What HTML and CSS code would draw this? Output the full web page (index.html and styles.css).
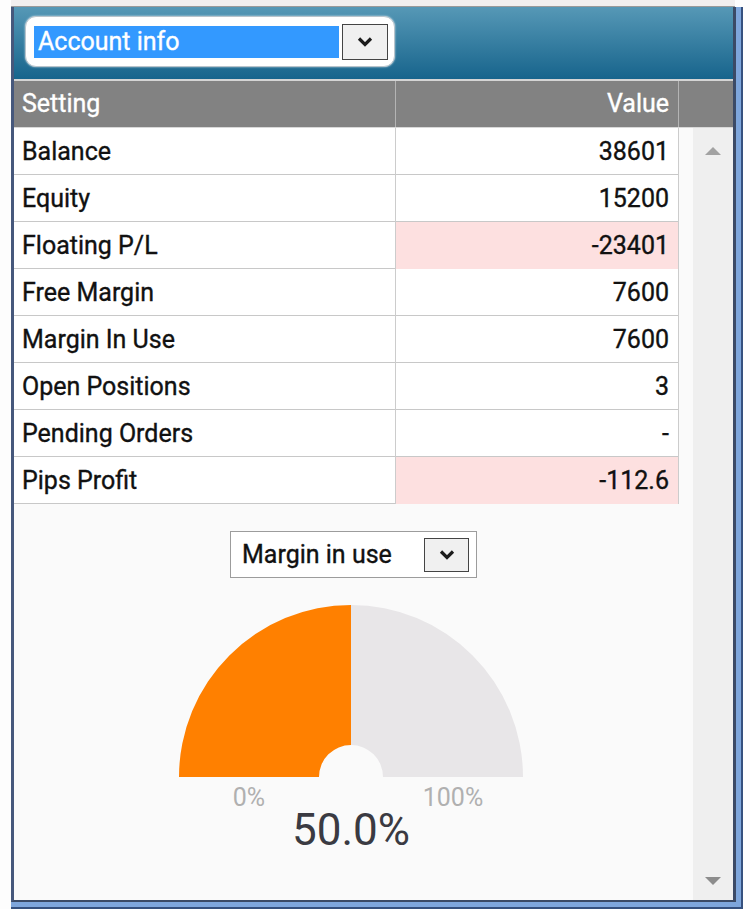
FILE: index.html
```html
<!DOCTYPE html>
<html lang="en">
<head>
    <meta charset="UTF-8">
    <title>Account info</title>
    <link rel="stylesheet" href="styles.css">
</head>
<body>
    <div class="screen">
        <div class="topbar"></div>
        <div class="frame-row">
            <div class="frame-outer">
                <div class="frame-mid">
                    <div class="window">
                        <div class="titlebar">
                            <div class="title-select">
                                <span class="title-text">Account info</span>
                                <span class="drop-btn">
                                    <svg width="20" height="12" viewBox="0 0 20 12"><path d="M4 2.5 L10 8.5 L16 2.5" fill="none" stroke="#1c1c1c" stroke-width="3.2"/></svg>
                                </span>
                            </div>
                        </div>
                        <div class="sep"></div>
                        <div class="thead">
                            <div class="th th-setting">Setting</div>
                            <div class="th th-value">Value</div>
                            <div class="th"></div>
                        </div>
                        <div class="body">
                            <div class="content">
                                <div class="rows">
                                    <div class="row"><div class="cell">Balance</div><div class="cell val">38601</div><div></div></div>
                                    <div class="row"><div class="cell">Equity</div><div class="cell val">15200</div><div></div></div>
                                    <div class="row"><div class="cell">Floating P/L</div><div class="cell val neg">-23401</div><div></div></div>
                                    <div class="row"><div class="cell">Free Margin</div><div class="cell val">7600</div><div></div></div>
                                    <div class="row"><div class="cell">Margin In Use</div><div class="cell val">7600</div><div></div></div>
                                    <div class="row"><div class="cell">Open Positions</div><div class="cell val">3</div><div></div></div>
                                    <div class="row"><div class="cell">Pending Orders</div><div class="cell val">-</div><div></div></div>
                                    <div class="row"><div class="cell">Pips Profit</div><div class="cell val neg">-112.6</div><div></div></div>
                                </div>
                                <div class="chart">
                                    <div class="chart-select">
                                        <span>Margin in use</span>
                                        <span class="drop-btn small">
                                            <svg width="20" height="12" viewBox="0 0 20 12"><path d="M4 2.5 L10 8.5 L16 2.5" fill="none" stroke="#1c1c1c" stroke-width="3.2"/></svg>
                                        </span>
                                    </div>
                                    <div class="gauge-wrap">
                                        <svg class="gauge" width="344" height="172" viewBox="0 0 344 172">
                                            <path d="M0 172 A172 172 0 0 1 172 0 L172 140 A32 32 0 0 0 140 172 Z" fill="#ff8000"/>
                                            <path d="M172 0 A172 172 0 0 1 344 172 L204 172 A32 32 0 0 0 172 140 Z" fill="#e8e6e8"/>
                                        </svg>
                                        <div class="gauge-labels">
                                            <span>0%</span>
                                            <span>100%</span>
                                        </div>
                                        <div class="gauge-value">50.0%</div>
                                    </div>
                                </div>
                            </div>
                            <div class="scrollbar">
                                <span class="arrow up"></span>
                                <span class="arrow down"></span>
                            </div>
                        </div>
                    </div>
                </div>
            </div>
        </div>
    </div>
</body>
</html>
```

FILE: styles.css
```css
* {
    box-sizing: border-box;
}

body {
    margin: 0;
    background: #fdfdfd;
    font-family: Roboto, "Liberation Sans", sans-serif;
}

.screen {
    width: 750px;
    height: 909px;
    display: flex;
    flex-direction: column;
    overflow: hidden;
}

.topbar {
    height: 7px;
    background: #f1efef;
    border-bottom: 1px solid #9a9a9a;
    margin-left: 11px;
    margin-right: 15px;
}

.frame-row {
    display: flex;
    padding-left: 11px;
}

.frame-outer {
    border-right: 2px solid #35507e;
    border-bottom: 2px solid #35507e;
}

.frame-mid {
    border-right: 5px solid #7ea6dc;
    border-bottom: 5px solid #7ea6dc;
}

.window {
    width: 725px;
    height: 895px;
    border-left: 3px solid #46587c;
    border-right: 3px solid #3b4a66;
    border-bottom: 2px solid #3b4a66;
    display: flex;
    flex-direction: column;
    background: #fafafa;
}

.titlebar {
    height: 72px;
    background: linear-gradient(#5698b6, #17648c);
    padding: 9px 0 0 11px;
}

.title-select {
    width: 370px;
    height: 51px;
    background: #fff;
    border: 1px solid #b8c4cc;
    border-radius: 11px;
    box-shadow: 0 0 2px rgba(255, 255, 255, 0.8);
    display: flex;
    align-items: center;
    padding: 0 6px 0 8px;
    gap: 3px;
}

.title-text {
    flex: 1;
    height: 32px;
    background: #3399ff;
    color: #fff;
    font-size: 25px;
    line-height: 32px;
    padding-left: 4px;
    -webkit-text-stroke: 0.35px #fff;
}

.drop-btn {
    width: 46px;
    height: 36px;
    background: #f0f0f0;
    border: 1px solid #444;
    display: flex;
    align-items: center;
    justify-content: center;
}

.drop-btn.small {
    width: 45px;
    height: 34px;
}

.sep {
    height: 2px;
    background: #d4d4d4;
}

.thead {
    height: 47px;
    display: grid;
    grid-template-columns: 382px 283px 1fr;
    background: #828282;
    border-bottom: 1px solid #d8d8d8;
}

.th {
    color: #fff;
    font-size: 25px;
    line-height: 46px;
    border-right: 1px solid #b4b4b4;
    -webkit-text-stroke: 0.35px #fff;
}

.th:last-child {
    border-right: none;
}

.th-setting {
    padding-left: 8px;
}

.th-value {
    text-align: right;
    padding-right: 9px;
}

.body {
    flex: 1;
    display: flex;
}

.content {
    flex: 1;
    display: flex;
    flex-direction: column;
}

.row {
    height: 47px;
    display: grid;
    grid-template-columns: 382px 283px 1fr;
    border-bottom: 1px solid #c8c8c8;
    background: #fff;
}

.row > div:last-child {
    background: #fafafa;
}

.cell {
    font-size: 25px;
    color: #111;
    line-height: 47px;
    padding-left: 8px;
    border-right: 1px solid #cccccc;
    -webkit-text-stroke: 0.35px #111;
}

.val {
    text-align: right;
    padding-right: 9px;
}

.neg {
    background: #fde0e0;
}

.chart {
    flex: 1;
    display: flex;
    flex-direction: column;
    align-items: center;
    padding-top: 27px;
}

.chart-select {
    width: 247px;
    height: 47px;
    background: #fff;
    border: 1px solid #9c9c9c;
    display: flex;
    align-items: center;
    justify-content: space-between;
    padding: 0 7px 0 11px;
    font-size: 25px;
    color: #111;
    -webkit-text-stroke: 0.35px #111;
}

.gauge-wrap {
    display: flex;
    flex-direction: column;
    align-items: center;
    margin-right: 5px;
}

.gauge {
    margin-top: 27px;
    display: block;
}

.gauge-labels {
    width: 344px;
    display: flex;
    justify-content: space-between;
    margin-top: 7px;
}

.gauge-labels span {
    width: 140px;
    text-align: center;
    font-size: 25px;
    color: #b0b0b0;
    line-height: 28px;
}

.gauge-value {
    font-size: 44px;
    color: #3a3a42;
    line-height: 46px;
    margin-top: -5px;
}

.scrollbar {
    width: 40px;
    background: #efefef;
    display: flex;
    flex-direction: column;
    justify-content: space-between;
    align-items: center;
    padding: 19px 0 15px;
}

.arrow {
    width: 0;
    height: 0;
    border-left: 8px solid transparent;
    border-right: 8px solid transparent;
}

.arrow.up {
    border-bottom: 8px solid #a2a2a2;
}

.arrow.down {
    border-top: 8px solid #8c8c8c;
}
```
